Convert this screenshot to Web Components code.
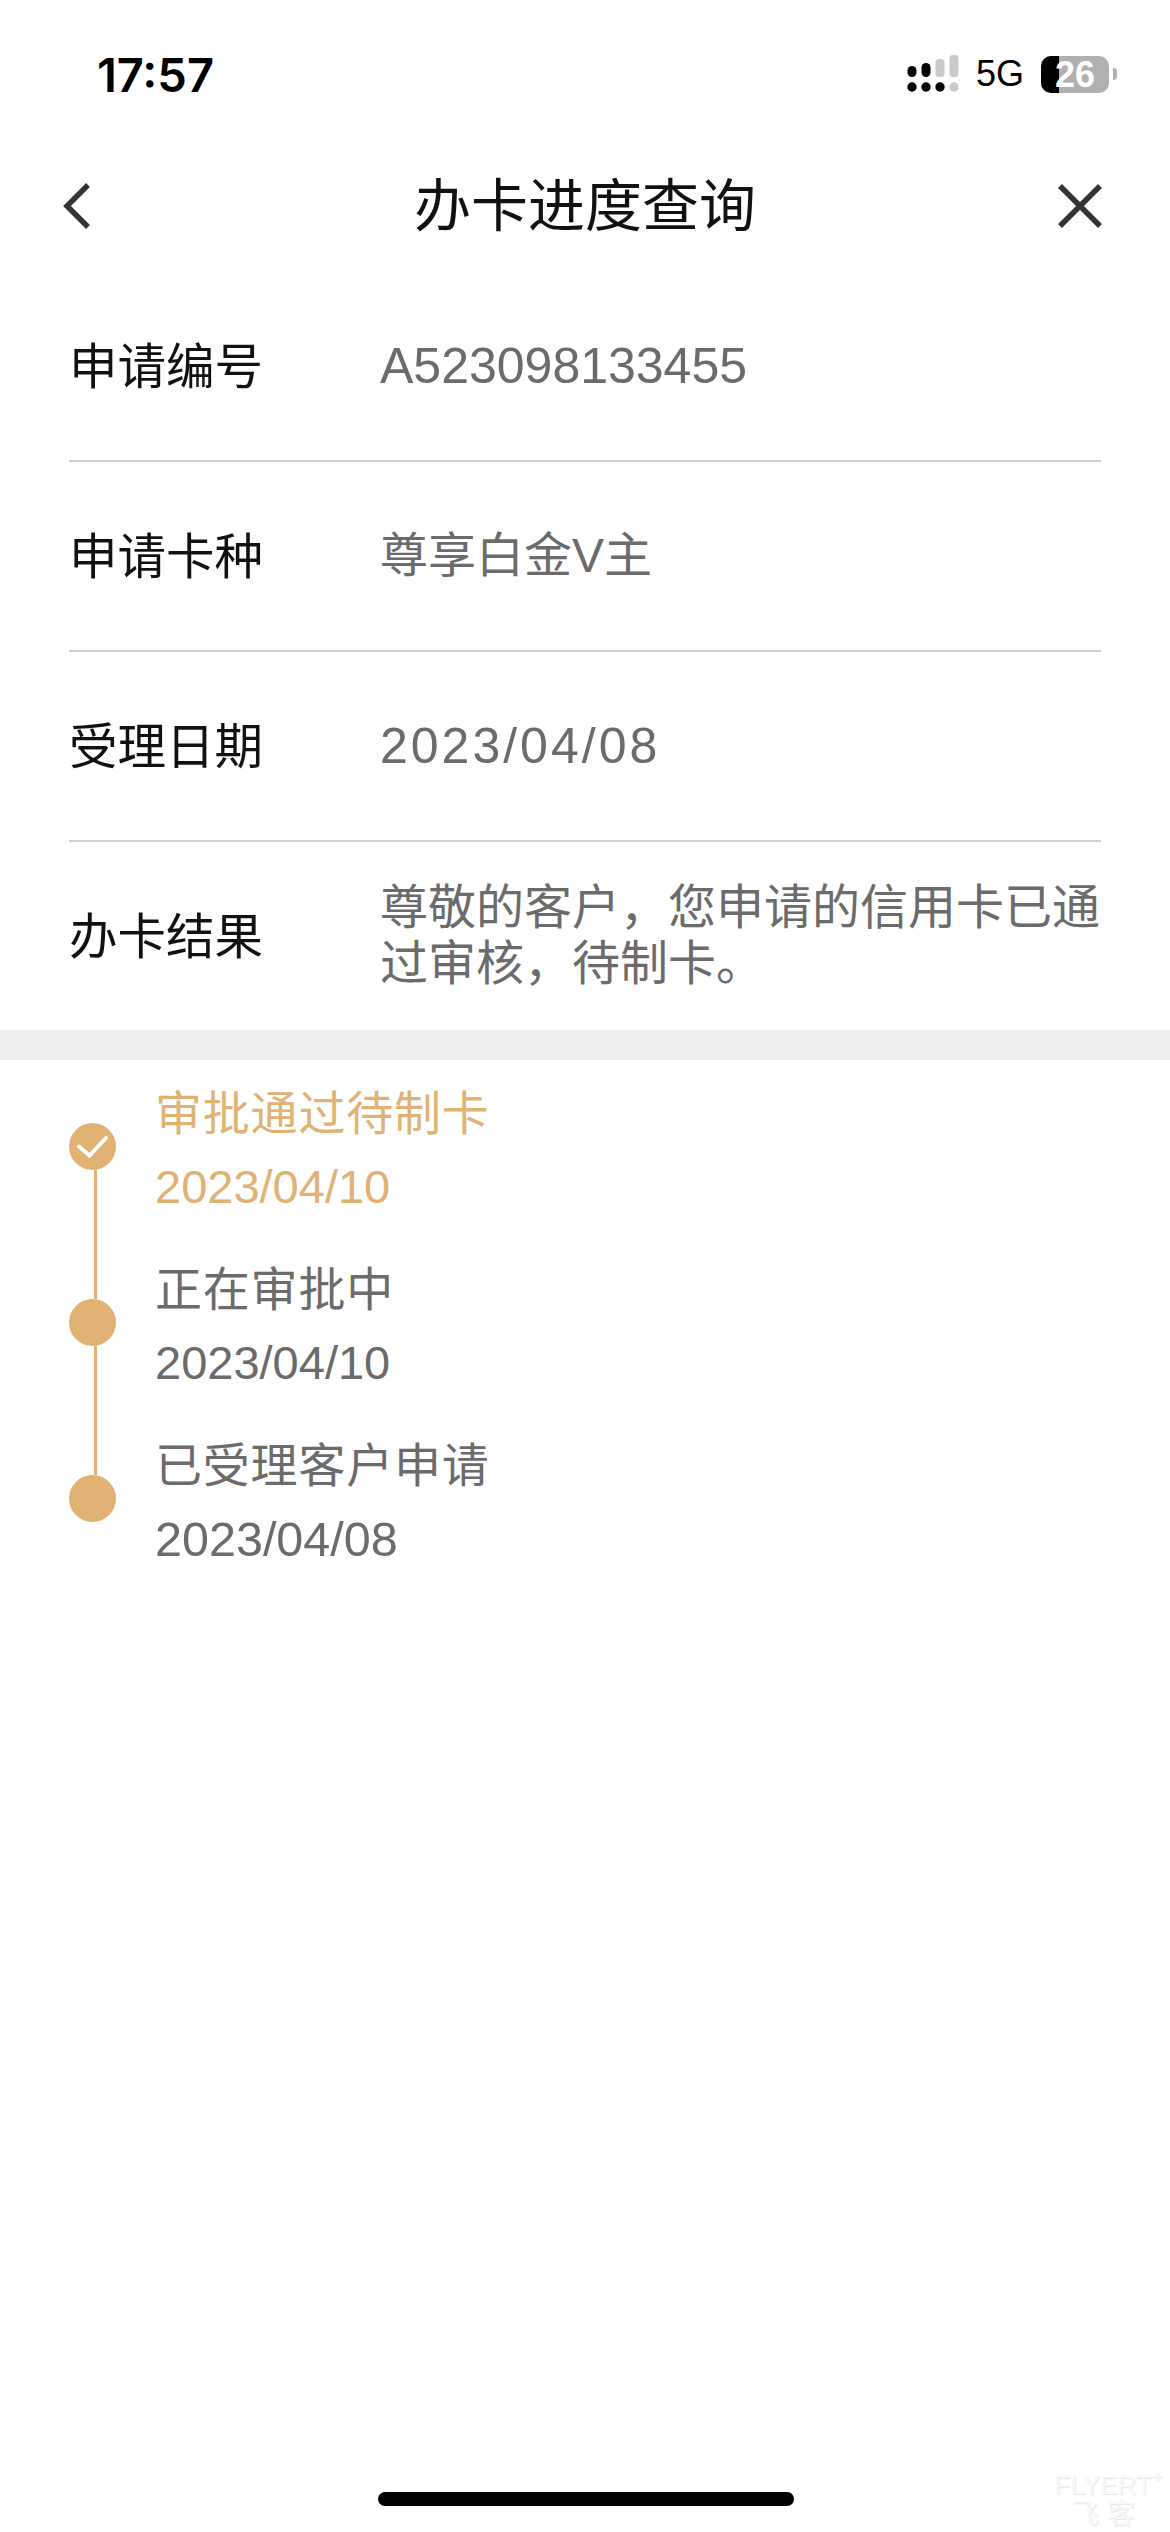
<!DOCTYPE html>
<html lang="zh-CN">
<head>
<meta charset="utf-8">
<title>办卡进度查询</title>
<style>
    html, body {
        margin: 0;
        background: #fff;
    }
    body {
        font-family: "Liberation Sans", "Noto Sans CJK SC", sans-serif;
    }
</style>
</head>
<body>
<app-page>
    <status-bar time="17:57" level="26"></status-bar>
    <nav-bar>办卡进度查询</nav-bar>
    <info-row label="申请编号" style="--value-size: 50px">A523098133455</info-row>
    <info-row label="申请卡种">尊享白金V主</info-row>
    <info-row label="受理日期" style="--value-size: 50px; --value-spacing: 3px">2023/04/08</info-row>
    <info-row label="办卡结果" last>尊敬的客户，您申请的信用卡已通过审核，待制卡。</info-row>
    <section-gap></section-gap>
    <progress-list>
        <progress-item title="审批通过待制卡" date="2023/04/10" first active></progress-item>
        <progress-item title="正在审批中" date="2023/04/10"></progress-item>
        <progress-item title="已受理客户申请" date="2023/04/08" last style="--date-size: 48.5px"></progress-item>
    </progress-list>
</app-page>

<script>
class AppPage extends HTMLElement {
    constructor() {
        super();
        this.attachShadow({ mode: 'open' });
        this.shadowRoot.innerHTML = `
            <style>
                :host {
                    display: flex;
                    flex-direction: column;
                    position: relative;
                    height: 2532px;
                    overflow: hidden;
                    background: #fff;
                }
                .home {
                    position: absolute;
                    left: 378px;
                    top: 2492px;
                    width: 416px;
                    height: 14px;
                    border-radius: 7px;
                    background: #000;
                }
                .mark {
                    position: absolute;
                    left: 1054px;
                    top: 2470px;
                    width: 98px;
                    text-align: center;
                    white-space: nowrap;
                    color: #f8f8f8;
                    font-size: 26px;
                    line-height: 30px;
                    text-shadow: 1px 1px 1px #e4e4e4;
                }
                .mark sup {
                    position: absolute;
                    left: 100%;
                    top: -2px;
                    font-size: 18px;
                    line-height: 18px;
                }
                .mark b {
                    display: block;
                    font-weight: 400;
                    font-size: 28px;
                }
            </style>
            <slot></slot>
            <div class="home"></div>
            <div class="mark">FLYERT<sup>+</sup><b>飞 客</b></div>
        `;
    }
}

class StatusBar extends HTMLElement {
    constructor() {
        super();
        this.attachShadow({ mode: 'open' });
        this.shadowRoot.innerHTML = `
            <style>
                :host {
                    display: flex;
                    align-items: center;
                    height: 148px;
                    padding: 0 53px 0 97px;
                    color: #000;
                }
                .time {
                    flex: 1;
                    font-family: Inter, "Liberation Sans", sans-serif;
                    font-size: 47px;
                    font-weight: 600;
                }
                svg {
                    display: block;
                }
                .net {
                    margin-left: 17px;
                    font-size: 36px;
                }
                .battery {
                    position: relative;
                    margin-left: 17px;
                    width: 68px;
                    height: 37px;
                    border-radius: 10px;
                    background: #b0b0b0;
                    text-align: center;
                    color: #fff;
                    font-size: 36px;
                    font-weight: 700;
                    line-height: 37px;
                }
                .fill {
                    position: absolute;
                    left: 0;
                    top: 0;
                    bottom: 0;
                    width: 18px;
                    border-radius: 10px 0 0 10px;
                    background: #000;
                }
                .level {
                    position: relative;
                }
                .tip {
                    margin-left: 4px;
                    width: 4px;
                    height: 12px;
                    border-radius: 0 6px 6px 0;
                    background: #b0b0b0;
                }
            </style>
            <div class="time"></div>
            <svg width="52" height="38" viewBox="0 0 52 38">
                <g fill="#000">
                    <circle cx="5" cy="32" r="4.7"/>
                    <circle cx="19" cy="32" r="4.7"/>
                    <circle cx="33" cy="32" r="4.7"/>
                    <rect x="0.5" y="11" width="9" height="11" rx="4.5"/>
                    <rect x="14.5" y="8" width="9" height="14" rx="4.5"/>
                </g>
                <g fill="#c9c9c9">
                    <circle cx="47" cy="32" r="4.7"/>
                    <rect x="28.5" y="4" width="9" height="18" rx="3.5"/>
                    <rect x="42.5" y="0" width="9" height="22" rx="3.5"/>
                </g>
            </svg>
            <div class="net">5G</div>
            <div class="battery"><div class="fill"></div><span class="level"></span></div>
            <div class="tip"></div>
        `;
    }

    connectedCallback() {
        this.shadowRoot.querySelector('.time').textContent = this.getAttribute('time');
        this.shadowRoot.querySelector('.level').textContent = this.getAttribute('level');
    }
}

class NavBar extends HTMLElement {
    constructor() {
        super();
        this.attachShadow({ mode: 'open' });
        this.shadowRoot.innerHTML = `
            <style>
                :host {
                    display: flex;
                    align-items: center;
                    justify-content: space-between;
                    height: 116px;
                    padding: 0 68px 8px 62px;
                    color: #111;
                }
                .title {
                    font-size: 57px;
                    font-family: "Noto Sans CJK SC", sans-serif;
                    margin-left: 20px;
                    padding-bottom: 10px;
                }
                svg {
                    display: block;
                }
            </style>
            <svg width="30" height="48" viewBox="0 0 30 48">
                <path d="M26 3 L5 24 L26 45" fill="none" stroke="#333" stroke-width="5.5"/>
            </svg>
            <div class="title"><slot></slot></div>
            <svg width="44" height="44" viewBox="0 0 44 44">
                <path d="M2 2 L42 42 M42 2 L2 42" fill="none" stroke="#333" stroke-width="5.5"/>
            </svg>
        `;
    }
}

class InfoRow extends HTMLElement {
    constructor() {
        super();
        this.attachShadow({ mode: 'open' });
        this.shadowRoot.innerHTML = `
            <style>
                :host {
                    display: block;
                    margin: 0 69px;
                    font-family: "Liberation Sans", "Noto Sans CJK SC", sans-serif;
                }
                .row {
                    display: flex;
                    align-items: center;
                    height: 188px;
                    border-bottom: 2px solid #cfcfcf;
                }
                :host([last]) .row {
                    border-bottom: 0;
                }
                .label {
                    width: 311px;
                    flex: none;
                    color: #111;
                    font-size: 48.5px;
                    padding-bottom: 6px;
                }
                .value {
                    flex: 1;
                    color: #6b6b6b;
                    font-size: var(--value-size, 48px);
                    line-height: 56px;
                    letter-spacing: var(--value-spacing, 0);
                }
            </style>
            <div class="row">
                <div class="label"></div>
                <div class="value"><slot></slot></div>
            </div>
        `;
    }

    connectedCallback() {
        this.shadowRoot.querySelector('.label').textContent = this.getAttribute('label');
    }
}

class SectionGap extends HTMLElement {
    constructor() {
        super();
        this.attachShadow({ mode: 'open' });
        this.shadowRoot.innerHTML = `
            <style>
                :host {
                    display: block;
                    height: 30px;
                    background: #eeeeee;
                }
            </style>
        `;
    }
}

class ProgressList extends HTMLElement {
    constructor() {
        super();
        this.attachShadow({ mode: 'open' });
        this.shadowRoot.innerHTML = `
            <style>
                :host {
                    display: flex;
                    flex-direction: column;
                    padding: 18px 0 0 69px;
                }
            </style>
            <slot></slot>
        `;
    }
}

class ProgressItem extends HTMLElement {
    constructor() {
        super();
        this.attachShadow({ mode: 'open' });
        this.shadowRoot.innerHTML = `
            <style>
                :host {
                    display: flex;
                    height: 176px;
                    color: #6b6b6b;
                }
                :host([active]) {
                    color: #e0b274;
                }
                .marker {
                    display: flex;
                    flex-direction: column;
                    align-items: center;
                    width: 47px;
                    flex: none;
                    margin-right: 39px;
                }
                .top {
                    width: 3px;
                    height: 45px;
                    margin-left: 5px;
                    background: #e0b274;
                }
                :host([first]) .top {
                    visibility: hidden;
                }
                .bottom {
                    width: 3px;
                    flex: 1;
                    margin-left: 5px;
                    background: #e0b274;
                }
                :host([last]) .bottom {
                    visibility: hidden;
                }
                .dot {
                    width: 47px;
                    height: 47px;
                    flex: none;
                    border-radius: 50%;
                    background: #e0b274;
                }
                .check {
                    display: none;
                }
                :host([active]) .check {
                    display: block;
                }
                .title {
                    font-size: 47px;
                    line-height: 56px;
                    margin-top: 8px;
                    letter-spacing: 0.8px;
                }
                .date {
                    font-size: var(--date-size, 47px);
                    line-height: 56px;
                    margin-top: 17px;
                }
            </style>
            <div class="marker">
                <div class="top"></div>
                <div class="dot">
                    <svg class="check" width="47" height="47" viewBox="0 0 47 47">
                        <path d="M10 23.5 L20.5 32.5 L37 15" fill="none" stroke="#fff" stroke-width="4" stroke-linecap="round" stroke-linejoin="miter"/>
                    </svg>
                </div>
                <div class="bottom"></div>
            </div>
            <div>
                <div class="title"></div>
                <div class="date"></div>
            </div>
        `;
    }

    connectedCallback() {
        this.shadowRoot.querySelector('.title').textContent = this.getAttribute('title');
        this.shadowRoot.querySelector('.date').textContent = this.getAttribute('date');
    }
}

customElements.define('app-page', AppPage);
customElements.define('status-bar', StatusBar);
customElements.define('nav-bar', NavBar);
customElements.define('info-row', InfoRow);
customElements.define('section-gap', SectionGap);
customElements.define('progress-list', ProgressList);
customElements.define('progress-item', ProgressItem);
</script>
</body>
</html>
